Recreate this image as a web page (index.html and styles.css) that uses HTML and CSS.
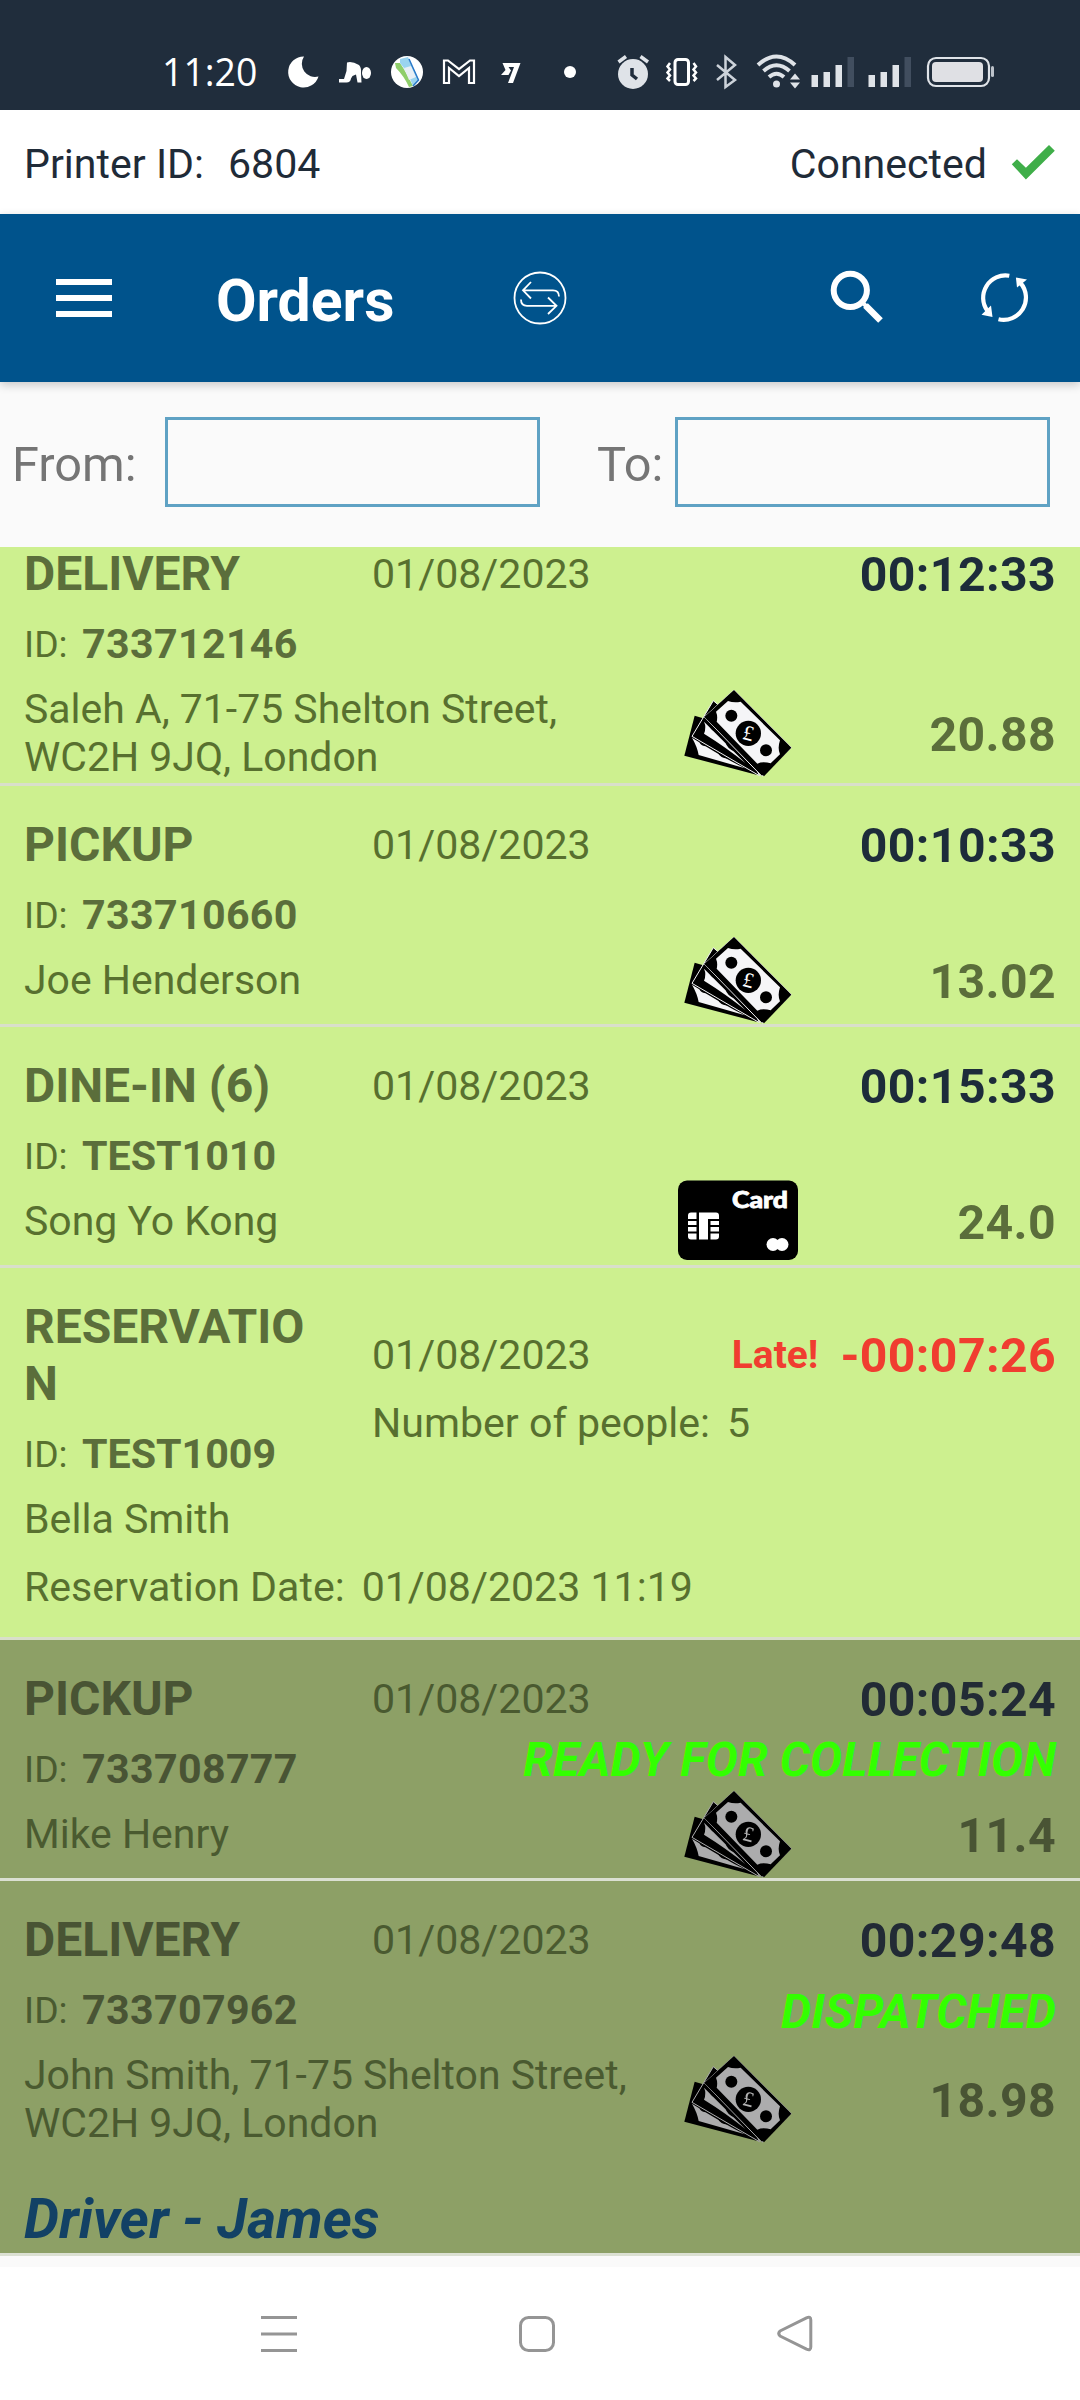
FILE: index.html
```
<!DOCTYPE html>
<html lang="en">
<head>
<meta charset="utf-8">
<title>Orders</title>
<link rel="stylesheet" href="styles.css">
</head>
<body>
<div class="status-bar">
  <span class="clock">11:20</span>
  <svg viewBox="280 52 48 40" width="48" height="40"><path class="fill-white" d="M304 56.500A15.500 15.500 0 1 0 318.500 76.500A13.200 13.200 0 0 1 304 56.500Z"/></svg>
  <svg viewBox="328 52 56 40" width="56" height="40"><path class="fill-white" d="M347 62.500Q352 61 359 65Q361.500 67.500 361 73L361.500 82.500H357.500L356 74.500L352.500 76L351 78.500Q350.500 82.500 346.500 82.500H339V79H344L346.500 71Z"/><ellipse class="fill-white" cx="366.500" cy="73" rx="4.500" ry="6"/></svg>
  <svg viewBox="384 52 46 40" width="46" height="40"><circle class="fill-white" cx="407" cy="72" r="16"/><path d="M395 63L400 63Q406 72 413 86L409 87Q404 76 396 68Z" fill="#8fce6b"/><path d="M400 59L408 57L419 80L413 86Q407 71 400 63Z" fill="#9ad4ef"/><path d="M404 68L411 66L416 77L409 80Z" fill="#e8eff5"/><path d="M409 59L418.500 80L413 86" fill="none" stroke="#2a78c8" stroke-width="1.500"/></svg>
  <svg viewBox="430 52 58 40" width="58" height="40"><path class="line-white" stroke-width="2.200" d="M444 60.500H448L459 69L470 60.500H474V83H469V68L459 76L449 68V83H444Z"/></svg>
  <svg viewBox="488 52 62 40" width="62" height="40"><path class="fill-white" d="M502.500 63H520.500L513 83H508L514 67H508.500L511 70.500L508.500 75H501L505.500 70Z"/></svg>
  <svg viewBox="550 52 60 40" width="60" height="40"><circle class="fill-white" cx="570" cy="72" r="6"/></svg>
  <svg viewBox="610 52 50 40" width="50" height="40"><circle cx="633" cy="74" r="15" fill="#dfe3e8"/><path d="M618.500 62L626 56.500M648 62L640.500 56.500" stroke="#dfe3e8" stroke-width="3.500"/><path d="M632 68V75L637 79" fill="none" stroke="#202d3c" stroke-width="3.500"/></svg>
  <svg viewBox="660 52 50 40" width="50" height="40"><rect class="line-white" stroke-width="3" x="675" y="59.500" width="13.500" height="25" rx="3"/><path class="line-white" stroke-width="2.500" d="M670 63L667.500 66.500L670 69.500L667.500 72.500L670 75.500L667.500 78.500L670 81M693.500 63L696 66.500L693.500 69.500L696 72.500L693.500 75.500L696 78.500L693.500 81"/></svg>
  <svg viewBox="710 52 40 40" width="40" height="40"><path d="M717 65L735 80L725.500 87V57L735 65L717 80" fill="none" stroke="#cdd3da" stroke-width="2.500"/></svg>
  <svg viewBox="750 52 55 40" width="55" height="40"><g fill="none" stroke="#dfe3e8" stroke-width="4"><path d="M758 65Q776.500 48 795 65"/><path d="M763.500 71Q776.500 59.500 789.500 71"/><path d="M769 77Q776.500 70.500 784 77"/></g><circle cx="776.500" cy="84" r="3.500" fill="#dfe3e8"/><path d="M795 73.500L800 79.500H790ZM795 88.500L800 82.500H790Z" fill="#dfe3e8"/></svg>
  <svg viewBox="805 52 57 40" width="57" height="40"><path d="M811.500 75H818V87H811.500ZM823.500 72H830V87H823.500ZM835.500 65H842V87H835.500Z" fill="#dfe3e8"/><path d="M847.500 57H854V87H847.500Z" fill="#414e5f"/></svg>
  <svg viewBox="862 52 58 40" width="58" height="40"><path d="M868.500 75H875V87H868.500ZM880.500 72H887V87H880.500ZM892.500 65H899V87H892.500Z" fill="#dfe3e8"/><path d="M904.500 57H911V87H904.500Z" fill="#414e5f"/></svg>
  <svg viewBox="920 52 80 40" width="80" height="40"><rect x="928" y="58" width="61" height="28" rx="8" fill="none" stroke="#dfe3e8" stroke-width="2.200"/><rect x="932" y="62" width="51" height="20" rx="4" fill="#dfe0e4"/><rect x="991" y="66" width="3" height="11" rx="1.500" fill="#bcc2ca"/></svg>
</div>

<div class="printer">
  <span>Printer ID:</span>
  <span class="printer-id">6804</span>
  <span class="printer-state">Connected</span>
  <svg class="printer-check" viewBox="1011 144 45 36" width="45" height="36"><path fill="#3fae49" d="M1011.800 164.300L1017 159.300L1025.900 167.800L1049 145L1054.800 150.700L1025.900 179.500Z"/></svg>
</div>

<header class="app-bar">
  <svg viewBox="56 278 56 38" width="56" height="38"><path class="fill-white" d="M56 278H112V284H56ZM56 294H112V300H56ZM56 310H112V316H56Z"/></svg>
  <h1 class="app-title">Orders</h1>
  <svg class="icon-swap" viewBox="512 270 56 56" width="56" height="56"><g class="line-white" stroke-width="1.800"><circle cx="540" cy="298" r="25.500"/><path d="M531 282L523 290.300L531 298.500M523 290.300H553Q559 290.300 559 296.500M548 297.500L556.500 305.800L548 314M556.500 305.800H527Q521 305.800 521 299.500"/></g></svg>
  <svg class="icon-search" viewBox="828 268 60 60" width="60" height="60"><circle class="line-white" cx="850.300" cy="290.300" r="16.600" stroke-width="6"/><path class="line-white" stroke-width="4" d="M861 301L868 308"/><path class="line-white" stroke-width="6.500" d="M865.500 305.500L880.500 320.500"/></svg>
  <svg class="icon-sync" viewBox="977 270 56 56" width="56" height="56"><g class="line-white" stroke-width="4.200"><path d="M1009.300 275.800A22.300 22.300 0 0 0 987.500 311"/><path d="M998.500 319.300A22.300 22.300 0 0 0 1020.500 283"/></g><path class="fill-white" d="M1015.900 277.500L1027 279.500L1017 287.500ZM981.500 314.800L991 305.500L992.500 317Z"/></svg>
</header>

<div class="filter">
  <label class="filter-from" for="from">From:</label>
  <input class="filter-input" id="from" type="text">
  <label class="filter-to" for="to">To:</label>
  <input class="filter-input" id="to" type="text">
</div>

<main class="orders">
  <article class="order order-scrolled">
    <div class="head"><h2 class="type">DELIVERY</h2><span class="date">01/08/2023</span><span class="timer">00:12:33</span></div>
    <div class="ids"><span class="id-label">ID:</span><b class="id">733712146</b></div>
    <div class="summary summary-tall">
      <p class="customer">Saleh A, 71-75 Shelton Street,<br>WC2H 9JQ, London</p>
      <svg class="pay" viewBox="24 24 360 264">
        <g id="cash">
          <path class="note-dark" d="M74 104L43 224L262 282L120 118Z"/>
          <path class="note-light" d="M66 170Q82 198 86 222L225 262Q160 230 66 170Z"/>
          <path class="note-dark" d="M88 183q6 14 24 13zM142 212q10 22 34 20z"/>
          <path class="note-edge" d="M130 59L66 166L268 284L200 120Z"/>
          <path class="note-light" d="M102 122Q110 138 102 158Q170 200 226 246Z"/>
          <path class="note-dark" d="M118 136q10 18 26 17zM165 180q6 24 30 32z"/>
          <path class="note-edge" d="M192 27L364 200L276 286L103 108Z"/>
          <path class="note-dark" d="M192 27L364 200L282 286L103 108Z"/>
          <path class="note-light" d="M174 60Q192 66 212 62L330 178Q322 202 330 220L302 247Q278 240 262 248L140 122Q144 106 138 92Z"/>
          <circle class="note-dark" cx="184" cy="104" r="18"/>
          <circle class="note-dark" cx="288" cy="208" r="18"/>
          <circle class="note-dark" cx="235" cy="157" r="38"/>
          <text class="pound" x="219" y="178" transform="rotate(14 235 157)">£</text>
        </g>
      </svg>
      <b class="price">20.88</b>
    </div>
  </article>
  <article class="order">
    <div class="head"><h2 class="type">PICKUP</h2><span class="date">01/08/2023</span><span class="timer">00:10:33</span></div>
    <div class="ids"><span class="id-label">ID:</span><b class="id">733710660</b></div>
    <div class="summary"><p class="customer">Joe Henderson</p><svg class="pay" viewBox="24 24 360 264"><use href="#cash"/></svg><b class="price">13.02</b></div>
  </article>
  <article class="order">
    <div class="head"><h2 class="type">DINE-IN (6)</h2><span class="date">01/08/2023</span><span class="timer">00:15:33</span></div>
    <div class="ids"><span class="id-label">ID:</span><b class="id id-alpha">TEST1010</b></div>
    <div class="summary">
      <p class="customer">Song Yo Kong</p>
      <svg class="pay" viewBox="0 -3.500 120 88">
        <rect width="120" height="79.500" rx="9"/>
        <text class="card-text" x="54" y="27" textLength="56" lengthAdjust="spacingAndGlyphs">Card</text>
        <path class="fill-light" d="M13 32H18.500V38.500H10V35Q10 32 13 32ZM10 40.500H18.500V44.500H10ZM10 46.500H18.500V51H10ZM10 53H18.500V59H13Q10 59 10 56ZM21 32H38Q41 32 41 35V38.500H30V59H21ZM32.500 40.500H41V44.500H32.500ZM32.500 46.500H41V51H32.500ZM32.500 53H41V56Q41 59 38 59H32.500Z"/>
        <circle class="fill-light" cx="95" cy="64" r="6.500"/>
        <circle class="fill-light" cx="104" cy="64" r="6.500"/>
      </svg>
      <b class="price">24.0</b>
    </div>
  </article>
  <article class="order order-reservation">
    <div class="head"><h2 class="type">RESERVATION</h2><span class="date">01/08/2023</span><b class="late">Late!</b><span class="timer timer-late">-00:07:26</span></div>
    <div class="ids"><span class="id-label">ID:</span><b class="id id-alpha">TEST1009</b><span class="people">Number of people:<span class="value">5</span></span></div>
    <p class="guest">Bella Smith</p>
    <p class="reserved">Reservation Date:<span class="value">01/08/2023 11:19</span></p>
  </article>
  <article class="order order-done">
    <div class="head"><h2 class="type">PICKUP</h2><span class="date">01/08/2023</span><span class="timer">00:05:24</span></div>
    <div class="ids"><span class="id-label">ID:</span><b class="id">733708777</b><em class="state state-ready">READY FOR COLLECTION</em></div>
    <div class="summary"><p class="customer">Mike Henry</p><svg class="pay" viewBox="24 24 360 264"><use href="#cash"/></svg><b class="price">11.4</b></div>
  </article>
  <article class="order order-done order-driver">
    <div class="head"><h2 class="type">DELIVERY</h2><span class="date">01/08/2023</span><span class="timer">00:29:48</span></div>
    <div class="ids"><span class="id-label">ID:</span><b class="id">733707962</b><em class="state">DISPATCHED</em></div>
    <div class="summary summary-tall"><p class="customer">John Smith, 71-75 Shelton Street,<br>WC2H 9JQ, London</p><svg class="pay" viewBox="24 24 360 264"><use href="#cash"/></svg><b class="price">18.98</b></div>
    <p class="driver">Driver - James</p>
  </article>
</main>

<nav class="nav">
  <svg viewBox="261 2314 36 40" width="36" height="40"><path d="M261 2317.500H297M261 2334H297M261 2350.500H297"/></svg>
  <svg viewBox="517 2314 40 40" width="40" height="40"><rect x="520.500" y="2317.500" width="33" height="33" rx="8"/></svg>
  <svg viewBox="775 2314 40 40" width="40" height="40"><path stroke-linejoin="round" d="M780 2331L806.500 2317.800Q810.800 2316 810.800 2320V2347Q810.800 2351 806.500 2349.200L780 2336Q777.500 2333.500 780 2331Z"/></svg>
</nav>
</body>
</html>
```
FILE: styles.css
```
* {
  box-sizing: border-box;
}

body {
  margin: 0;
  width: 1080px;
  height: 2400px;
  overflow: hidden;
  display: flex;
  flex-direction: column;
  background: #fafafa;
  font: 41.1px/48px Roboto, sans-serif;
  color: #1f2b38;
}

h1, h2, p {
  margin: 0;
}

svg {
  display: block;
  flex: none;
}

.fill-white, .fill-light { fill: #fff; }
.line-white { fill: none; stroke: #fff; }

/* System status bar */
.status-bar {
  flex: none;
  height: 110px;
  padding-top: 34px;
  display: flex;
  align-items: center;
  background: #202d3c;
}

.clock {
  width: 280px;
  padding-left: 162px;
  font: 500 37.4px/40px "Open Sans", sans-serif;
  color: #fff;
}

/* Printer connection strip */
.printer {
  flex: none;
  height: 104px;
  padding: 4px 24px 0;
  display: flex;
  align-items: center;
  background: #fff;
}

.printer-id { margin-left: 24px; }
.printer-state { margin-left: auto; }
.printer-check { margin: -5px 0 0 24px; }

/* Header */
.app-bar {
  flex: none;
  height: 168px;
  padding-left: 56px;
  display: flex;
  align-items: center;
  background: #00538c;
  box-shadow: 0 3px 9px rgba(0, 0, 0, 0.2);
  position: relative;
}

.app-title {
  width: 296px;
  margin-left: 104px;
  padding-top: 5px;
  font-size: 58.900px;
  font-weight: 700;
  line-height: 70px;
  color: #fff;
}

.icon-search { margin-left: 260px; }
.icon-sync { margin-left: 89px; }

/* Date range filter */
.filter {
  flex: none;
  height: 165px;
  padding: 35px 30px 40px 12px;
  display: flex;
  color: #757575;
  font-size: 48.700px;
  line-height: 96px;
}

.filter-from { width: 153px; }

.filter-to {
  width: 135px;
  padding-left: 57px;
}

.filter-input {
  width: 375px;
  height: 90px;
  border: 3px solid #5fa2c4;
  background: transparent;
  font: inherit;
}

/* Orders */
.orders {
  flex: none;
  height: 1709px;
  overflow: hidden;
}

.order {
  height: 241px;
  padding: 30px 24px 0;
  border-bottom: 3px solid #d9dfcb;
  background: #cdf08f;
  color: #58702f;
}

.order-scrolled {
  height: 271px;
  margin-top: -32px;
}

.order-reservation { height: 372px; }
.order-driver { height: 375px; }

.order-done {
  background: #8da066;
  border-color: #dbe0d2;
  color: #4a5a30;
}

.head {
  display: flex;
  align-items: center;
}

.type {
  width: 300px;
  margin-right: 48px;
  font-size: 48px;
  line-height: 57px;
  font-weight: 700;
  word-break: break-all;
  color: #5b6e3b;
}

.order-done .type,
.order-done .id,
.order-done .price {
  color: #495434;
}

.timer {
  margin-left: auto;
  padding-top: 2px;
  font-size: 48.200px;
  font-weight: 700;
  letter-spacing: 0.400px;
  color: #1d2c3a;
}

.order-done .timer { color: #222b35; }

.late {
  margin-left: auto;
  font-size: 38.900px;
  color: #f03d30;
}

.timer.timer-late {
  margin-left: 22px;
  color: #f03d30;
}

.ids {
  height: 48px;
  margin-top: 18px;
  display: flex;
  align-items: center;
}

.id-label {
  width: 58px;
  font-size: 37.300px;
}

.id {
  width: 290px;
  font-size: 41.200px;
  letter-spacing: 0.350px;
  color: #5b6e3b;
}

.id-alpha { letter-spacing: 0; }

.people {
  align-self: flex-start;
  margin-top: -31px;
}

.value { margin-left: 17px; }

.state {
  margin: 3px 0 0 auto;
  font-size: 48px;
  font-weight: 700;
  white-space: nowrap;
  color: #3f0;
}

.state-ready { margin-top: -19px; }

.summary {
  height: 88px;
  margin-top: -3px;
  display: flex;
  align-items: center;
}

.summary-tall {
  height: 96px;
  margin-top: 17px;
}

.customer {
  width: 654px;
  font-size: 40.950px;
}

.guest { margin-top: 17px; }
.reserved { margin-top: 20px; }

.pay {
  width: 120px;
  height: 88px;
}

.summary-tall .pay { margin-top: -1px; }

.price {
  margin: 4px 0 0 auto;
  font-size: 48.200px;
  letter-spacing: 0.400px;
  color: #5b6e3b;
}

.summary-tall .price { margin-top: 3px; }

.driver {
  margin-top: 40px;
  font-size: 55.500px;
  font-style: italic;
  font-weight: 700;
  line-height: 65px;
  color: #124165;
}

/* Payment icons */
.note-dark { fill: #000; }
.note-light { fill: #f5f5f7; }
.note-edge { fill: #000; stroke: #f5f5f7; stroke-width: 3px; }

.pound {
  font: 64px "Liberation Serif", serif;
  fill: #fff;
}

.card-text {
  font: 900 22.500px Lato, sans-serif;
  fill: #fff;
  stroke: #fff;
  stroke-width: 0.800px;
}

.order-done .pay { filter: brightness(0.7); }

/* System navigation */
.nav {
  flex: 1;
  margin-top: 11px;
  padding: 47px 0 0 261px;
  display: flex;
  background: #fff;
}

.nav svg {
  fill: none;
  stroke: #959595;
  stroke-width: 3px;
}

.nav svg + svg { margin-left: 220px; }
.nav svg + svg + svg { margin-left: 218px; }
```
